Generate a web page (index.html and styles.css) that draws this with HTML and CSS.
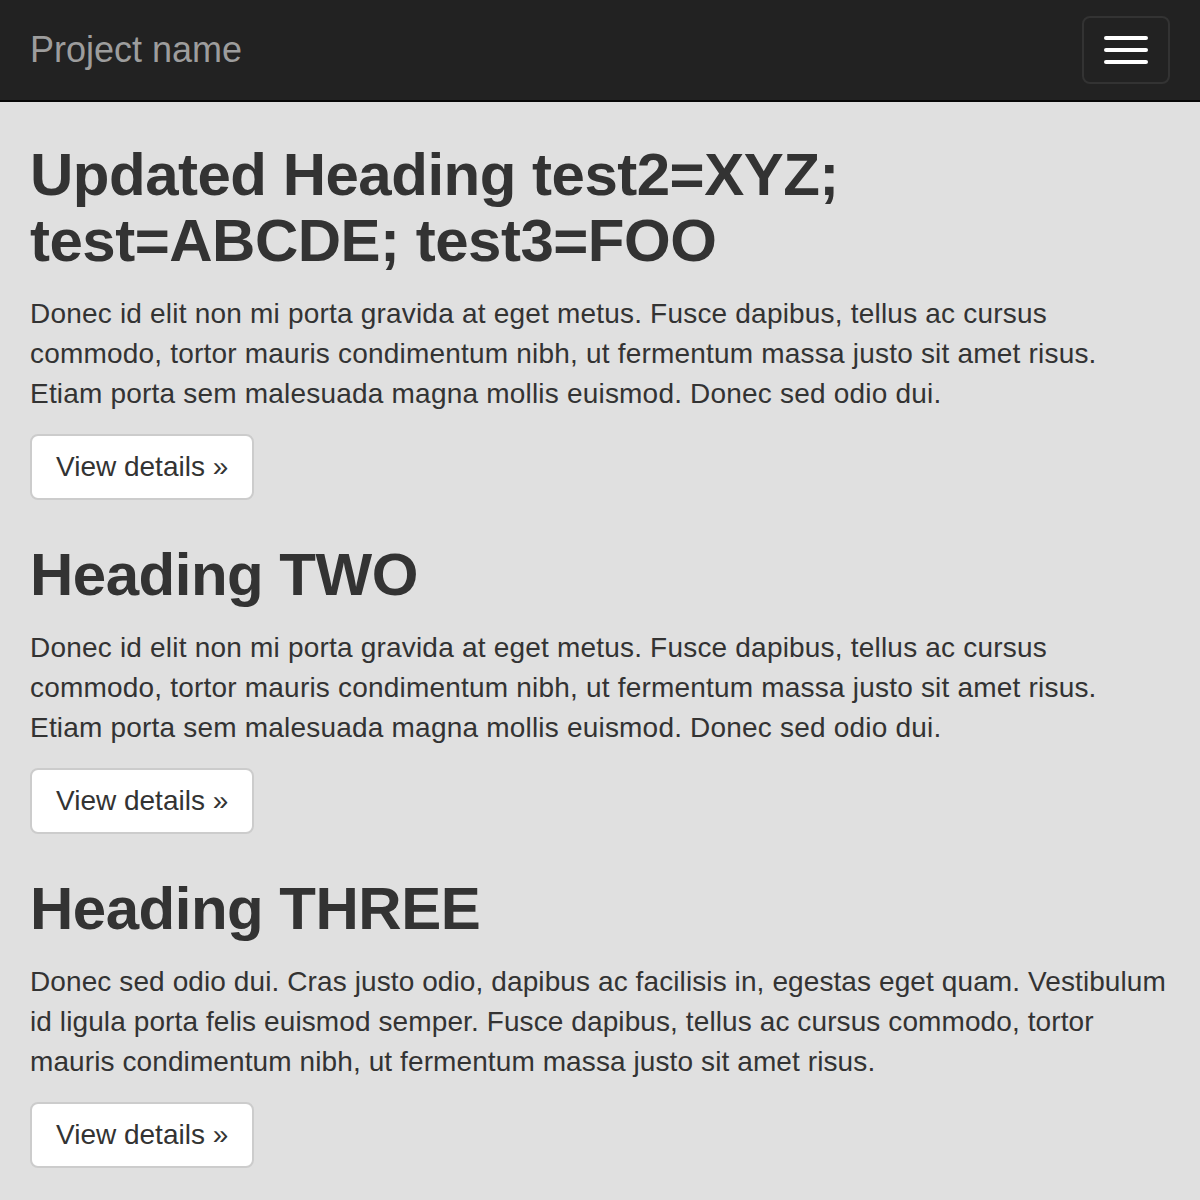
FILE: index.html
```html
<!DOCTYPE html>
<html>
<head>
<meta charset="utf-8">
<title>Project name</title>
<link rel="stylesheet" href="styles.css">
</head>
<body>
<nav class="navbar">
  <a class="brand" href="#">Project name</a>
  <button class="toggle" type="button" aria-label="Toggle navigation">
    <span class="bar"></span>
    <span class="bar"></span>
    <span class="bar"></span>
  </button>
</nav>
<main class="container">
  <section class="col">
    <h2>Updated Heading test2=XYZ; test=ABCDE; test3=FOO</h2>
    <p class="text">Donec id elit non mi porta gravida at eget metus. Fusce dapibus, tellus ac cursus commodo, tortor mauris condimentum nibh, ut fermentum massa justo sit amet risus. Etiam porta sem malesuada magna mollis euismod. Donec sed odio dui.</p>
    <p class="actions"><a class="btn" href="#">View details &raquo;</a></p>
  </section>
  <section class="col">
    <h2>Heading TWO</h2>
    <p class="text">Donec id elit non mi porta gravida at eget metus. Fusce dapibus, tellus ac cursus commodo, tortor mauris condimentum nibh, ut fermentum massa justo sit amet risus. Etiam porta sem malesuada magna mollis euismod. Donec sed odio dui.</p>
    <p class="actions"><a class="btn" href="#">View details &raquo;</a></p>
  </section>
  <section class="col">
    <h2>Heading THREE</h2>
    <p class="text text-narrow">Donec sed odio dui. Cras justo odio, dapibus ac facilisis in, egestas eget quam. Vestibulum id ligula porta felis euismod semper. Fusce dapibus, tellus ac cursus commodo, tortor mauris condimentum nibh, ut fermentum massa justo sit amet risus.</p>
    <p class="actions"><a class="btn" href="#">View details &raquo;</a></p>
  </section>
</main>
</body>
</html>
```

FILE: styles.css
```css
* { box-sizing: border-box; }
html, body { margin: 0; padding: 0; }
body {
  background: #e0e0e0;
  color: #333;
  font-family: "Liberation Sans", Arial, Helvetica, sans-serif;
  font-size: 28px;
  line-height: 40px;
}
.navbar {
  display: flex;
  justify-content: space-between;
  align-items: flex-start;
  height: 102px;
  background: #222;
  border-bottom: 2px solid #080808;
  padding: 0 30px;
}
.brand {
  display: block;
  height: 100px;
  padding: 30px 0;
  font-size: 36px;
  line-height: 40px;
  color: #9d9d9d;
  text-decoration: none;
}
.toggle {
  margin-top: 16px;
  padding: 18px 20px;
  background: transparent;
  border: 2px solid #333;
  border-radius: 8px;
  display: flex;
  flex-direction: column;
  gap: 8px;
  cursor: pointer;
}
.bar {
  display: block;
  width: 44px;
  height: 4px;
  border-radius: 2px;
  background: #fff;
}
.container {
  padding: 0 30px;
}
.col { display: block; }
h2 {
  font-size: 60px;
  line-height: 66px;
  font-weight: 700;
  letter-spacing: -0.5px;
  margin: 40px 0 20px;
  font-family: inherit;
}
p {
  margin: 0 0 20px;
}
.text { letter-spacing: 0.2px; }
.text-narrow { letter-spacing: 0.1px; }
.actions { margin-bottom: 42px; }
.btn {
  display: inline-block;
  vertical-align: middle;
  padding: 11px 24px;
  font-size: 28px;
  line-height: 40px;
  letter-spacing: 0;
  color: #333;
  background: #fff;
  border: 2px solid #ccc;
  border-radius: 8px;
  text-decoration: none;
}
```
